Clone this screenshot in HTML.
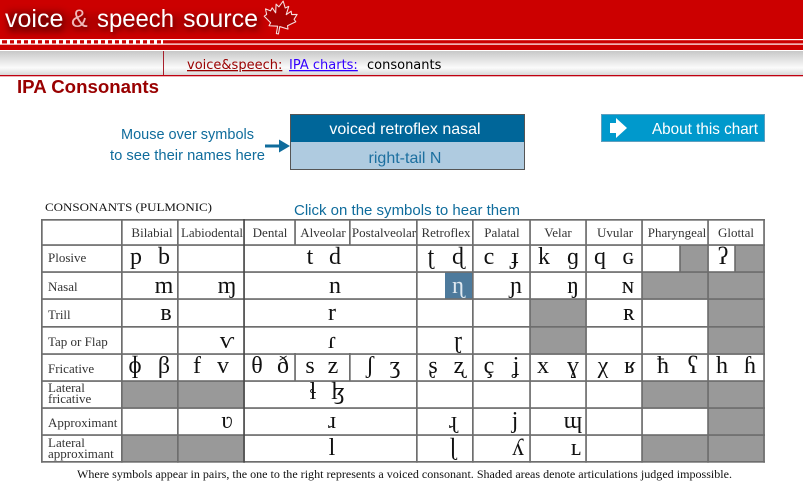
<!DOCTYPE html>
<html><head><meta charset="utf-8"><style>
html,body{margin:0;padding:0;background:#fff;width:803px;height:488px;overflow:hidden}
svg{display:block}
.l{font:13px "Liberation Serif","DejaVu Serif",serif;fill:#333}
.h{font:13px "Liberation Serif","DejaVu Serif",serif;fill:#333;text-anchor:middle}
.s{font:24px "Liberation Serif","DejaVu Serif",serif;fill:#111;text-anchor:middle}
.b{font:15px "Liberation Sans",sans-serif;fill:#0f6c9c}
.t{font:25px "Liberation Sans",sans-serif;fill:#fff;filter:drop-shadow(2px 3px 2px #800000)}
</style></head><body>
<svg width="803" height="488" viewBox="0 0 803 488" xmlns="http://www.w3.org/2000/svg">
<defs>
<linearGradient id="g" x1="0" y1="0" x2="0" y2="1"><stop offset="0" stop-color="#c8c8c8"/><stop offset=".7" stop-color="#fbfbfb"/><stop offset="1" stop-color="#d8d8d8"/></linearGradient>
<filter id="bl" x="-20%" y="-50%" width="140%" height="200%"><feGaussianBlur stdDeviation="4"/></filter>
</defs>
<rect width="803" height="51" fill="#cc0000"/>
<rect x="8" y="12" width="55" height="20" fill="#7a0000" opacity=".85" filter="url(#bl)"/>
<rect x="63" y="14" width="200" height="18" fill="#8a0000" opacity=".4" filter="url(#bl)"/>
<rect x="0" y="39" width="803" height="1.200" fill="#fff"/>
<rect x="0" y="43.500" width="803" height="1.200" fill="#fff"/>
<path fill="#fff" d="M0 40h2v4H0zM7 40h3v4H7zM14 40h3v4h-3zM21 40h3v4h-3zM28 40h3v4h-3zM35 40h3v4h-3zM42 40h3v4h-3zM49 40h3v4h-3zM56 40h3v4h-3zM63 40h3v4h-3zM70 40h3v4h-3zM77 40h3v4h-3zM84 40h3v4h-3zM91 40h3v4h-3zM98 40h3v4h-3zM105 40h3v4h-3zM112 40h3v4h-3zM119 40h3v4h-3zM126 40h3v4h-3zM133 40h3v4h-3zM140 40h3v4h-3zM147 40h3v4h-3zM154 40h3v4h-3zM161 40h2v4h-2z"/>
<rect x="0" y="50" width="803" height="1" fill="#fff"/>
<text class="t" x="5" y="27">voice</text>
<text class="t" x="71" y="27" style="fill:#f0b8b8">&amp;</text>
<text class="t" x="97" y="27" textLength="77" lengthAdjust="spacingAndGlyphs">speech</text>
<text class="t" x="183" y="27">source</text>
<path transform="translate(280 19) rotate(10) scale(1.07)" fill="#a80000" stroke="#f7dede" stroke-width="1" stroke-linejoin="round" d="M0-17 3-11 6-13 5-5 9-9 10-6 15-7 13-2 15 0 8 5 9 8 1 7 1 14-1 14-1 7-9 8-8 5-15 0-13-2-15-7-10-6-9-9-5-5-6-13-3-11Z"/>

<rect x="0" y="51" width="803" height="24" fill="url(#g)"/>
<rect x="163" y="51" width="1" height="24" fill="#a8202c"/>
<rect x="0" y="75" width="803" height="1.300" fill="#c00010"/>
<text y="69" style="font:13px 'DejaVu Sans',sans-serif"><tspan x="187" fill="#990000" text-decoration="underline">voice&amp;speech:</tspan><tspan x="289" fill="#3300ff" text-decoration="underline">IPA charts:</tspan><tspan x="367" fill="#000">consonants</tspan></text>
<text x="17" y="93" textLength="142" lengthAdjust="spacingAndGlyphs" style="font:bold 18.500px 'Liberation Sans',sans-serif;fill:#990000">IPA Consonants</text>

<text class="b" x="121" y="139" textLength="133" lengthAdjust="spacingAndGlyphs">Mouse over symbols</text>
<text class="b" x="110" y="160" textLength="155" lengthAdjust="spacingAndGlyphs">to see their names here</text>
<path fill="#0f6c9c" d="M265 144.500h14v-5l11 6.500-11 6.500v-5h-14z"/>
<rect x="290.500" y="114.500" width="234" height="55" fill="#afcbe0" stroke="#555"/>
<rect x="291" y="115" width="233" height="27" fill="#006699"/>
<text x="405" y="134" text-anchor="middle" style="font:16px 'Liberation Sans',sans-serif;fill:#fff">voiced retroflex nasal</text>
<text x="405" y="163" text-anchor="middle" style="font:16px 'Liberation Sans',sans-serif;fill:#1c6f9f">right-tail N</text>

<rect x="601.500" y="114.500" width="163" height="27" fill="#0099cc" stroke="#5f9fbe"/>
<path fill="#fff" d="M610 123h6v-5l11 10-11 10v-5h-6z"/>
<text x="652" y="134" textLength="106" lengthAdjust="spacingAndGlyphs" style="font:16px 'Liberation Sans',sans-serif;fill:#fff">About this chart</text>

<text x="45" y="211" textLength="167" lengthAdjust="spacingAndGlyphs" style="font:12px 'Liberation Serif',serif;fill:#111">CONSONANTS (PULMONIC)</text>
<text class="b" x="294" y="215" textLength="226" lengthAdjust="spacingAndGlyphs">Click on the symbols to hear them</text>

<!-- shaded -->
<g fill="#999">
<rect x="680" y="245" width="28" height="27"/><rect x="735" y="245" width="29" height="27"/>
<rect x="642" y="272" width="122" height="27"/>
<rect x="530" y="299" width="56" height="55"/><rect x="708" y="299" width="56" height="55"/>
<rect x="122" y="381" width="122" height="27"/><rect x="642" y="381" width="122" height="27"/>
<rect x="708" y="408" width="56" height="27"/>
<rect x="122" y="435" width="122" height="27"/><rect x="642" y="435" width="122" height="27"/>
</g>
<rect x="445" y="272" width="28" height="27" fill="#4d7a9c"/>

<!-- grid -->
<g fill="#6e6e6e">
<rect x="41" y="219" width="724" height="1.700"/>
<rect x="41" y="244.200" width="724" height="1.700"/>
<rect x="41" y="271.200" width="724" height="1.700"/>
<rect x="41" y="298.200" width="724" height="1.700"/>
<rect x="41" y="326" width="724" height="1.700"/>
<rect x="41" y="353.200" width="724" height="1.700"/>
<rect x="41" y="380.200" width="724" height="1.700"/>
<rect x="41" y="407.200" width="724" height="1.700"/>
<rect x="41" y="434.200" width="724" height="1.700"/>
<rect x="41" y="461" width="724" height="1.700"/>
<rect x="41" y="219" width="1.700" height="243.700"/>
<rect x="121" y="219" width="1.700" height="243.700"/>
<rect x="177" y="219" width="1.700" height="243.700"/>
<rect x="243.200" y="219" width="1.700" height="243.700" fill="#4a4a4a"/>
<rect x="416" y="219" width="1.700" height="243.700"/>
<rect x="472" y="219" width="1.700" height="243.700"/>
<rect x="529.200" y="219" width="1.700" height="243.700"/>
<rect x="585.200" y="219" width="1.700" height="243.700"/>
<rect x="641.200" y="219" width="1.700" height="243.700"/>
<rect x="707.200" y="219" width="1.700" height="243.700"/>
<rect x="763.200" y="219" width="1.700" height="243.700"/>
<rect x="294.200" y="219" width="1.700" height="26"/>
<rect x="349" y="219" width="1.700" height="26"/>
<rect x="294.200" y="353" width="1.700" height="28"/>
<rect x="349" y="353" width="1.700" height="28"/>
<rect x="679.200" y="245" width="1.700" height="27"/>
<rect x="734.200" y="245" width="1.700" height="27"/>
</g>

<!-- column heads -->
<text class="h" x="152" y="237">Bilabial</text>
<text class="h" x="212" y="237">Labiodental</text>
<text class="h" x="270" y="237">Dental</text>
<text class="h" x="323" y="237">Alveolar</text>
<text class="h" x="384" y="237">Postalveolar</text>
<text class="h" x="446" y="237">Retroflex</text>
<text class="h" x="502" y="237">Palatal</text>
<text class="h" x="558" y="237">Velar</text>
<text class="h" x="615" y="237">Uvular</text>
<text class="h" x="677" y="237">Pharyngeal</text>
<text class="h" x="736" y="237">Glottal</text>

<!-- row heads -->
<text class="l" x="48" y="262">Plosive</text>
<text class="l" x="48" y="291">Nasal</text>
<text class="l" x="48" y="319">Trill</text>
<text class="l" x="48" y="346">Tap or Flap</text>
<text class="l" x="48" y="373">Fricative</text>
<text class="l" x="48" y="392">Lateral</text>
<text class="l" x="48" y="403">fricative</text>
<text class="l" x="48" y="427">Approximant</text>
<text class="l" x="48" y="447">Lateral</text>
<text class="l" x="48" y="458">approximant</text>

<!-- symbols -->
<text class="s" x="136" y="264">p</text><text class="s" x="164" y="264">b</text><text class="s" x="310" y="264">t</text><text class="s" x="335" y="264">d</text><text class="s" x="431" y="264">ʈ</text><text class="s" x="458" y="264">ɖ</text><text class="s" x="489" y="264">c</text><text class="s" x="515" y="264">ɟ</text><text class="s" x="544" y="264">k</text><text class="s" x="573" y="264">ɡ</text><text class="s" x="600" y="264">q</text><text class="s" x="628" y="264">ɢ</text><text class="s" x="723" y="264">ʔ</text>
<text class="s" x="164" y="293">m</text><text class="s" x="227" y="293">ɱ</text><text class="s" x="335" y="293">n</text><text class="s" x="458" y="293" style="fill:#dfe8ef">ɳ</text><text class="s" x="516" y="293">ɲ</text><text class="s" x="573" y="293">ŋ</text><text class="s" x="628" y="293">ɴ</text>
<text class="s" x="166" y="320">ʙ</text><text class="s" x="332" y="320">r</text><text class="s" x="629" y="320">ʀ</text>
<text class="s" x="227" y="348">ⱱ</text><text class="s" x="332" y="348">ɾ</text><text class="s" x="458" y="348">ɽ</text>
<text class="s" x="135" y="373">ɸ</text><text class="s" x="164" y="373">β</text><text class="s" x="197" y="373">f</text><text class="s" x="223" y="373">v</text><text class="s" x="257" y="373">θ</text><text class="s" x="283" y="373">ð</text><text class="s" x="310" y="373">s</text><text class="s" x="333" y="373">z</text><text class="s" x="370" y="373">ʃ</text><text class="s" x="395" y="373">ʒ</text><text class="s" x="433" y="373">ʂ</text><text class="s" x="459" y="373">ʐ</text><text class="s" x="489" y="373">ç</text><text class="s" x="516" y="373">ʝ</text><text class="s" x="543" y="373">x</text><text class="s" x="573" y="373">ɣ</text><text class="s" x="603" y="373">χ</text><text class="s" x="630" y="373">ʁ</text><text class="s" x="663" y="373">ħ</text><text class="s" x="693" y="373">ʕ</text><text class="s" x="722" y="373">h</text><text class="s" x="750" y="373">ɦ</text>
<text class="s" x="313" y="399">ɬ</text><text class="s" x="338" y="399">ɮ</text>
<text class="s" x="227" y="428">ʋ</text><text class="s" x="332" y="428">ɹ</text><text class="s" x="453" y="428">ɻ</text><text class="s" x="515" y="428">j</text><text class="s" x="573" y="428">ɰ</text>
<text class="s" x="332" y="455">l</text><text class="s" x="453" y="455">ɭ</text><text class="s" x="518" y="455">ʎ</text><text class="s" x="576" y="455">ʟ</text>

<text x="77" y="478" textLength="655" lengthAdjust="spacingAndGlyphs" style="font:12px 'Liberation Serif',serif;fill:#111">Where symbols appear in pairs, the one to the right represents a voiced  consonant. Shaded areas denote articulations judged impossible.</text>
</svg>
</body></html>
